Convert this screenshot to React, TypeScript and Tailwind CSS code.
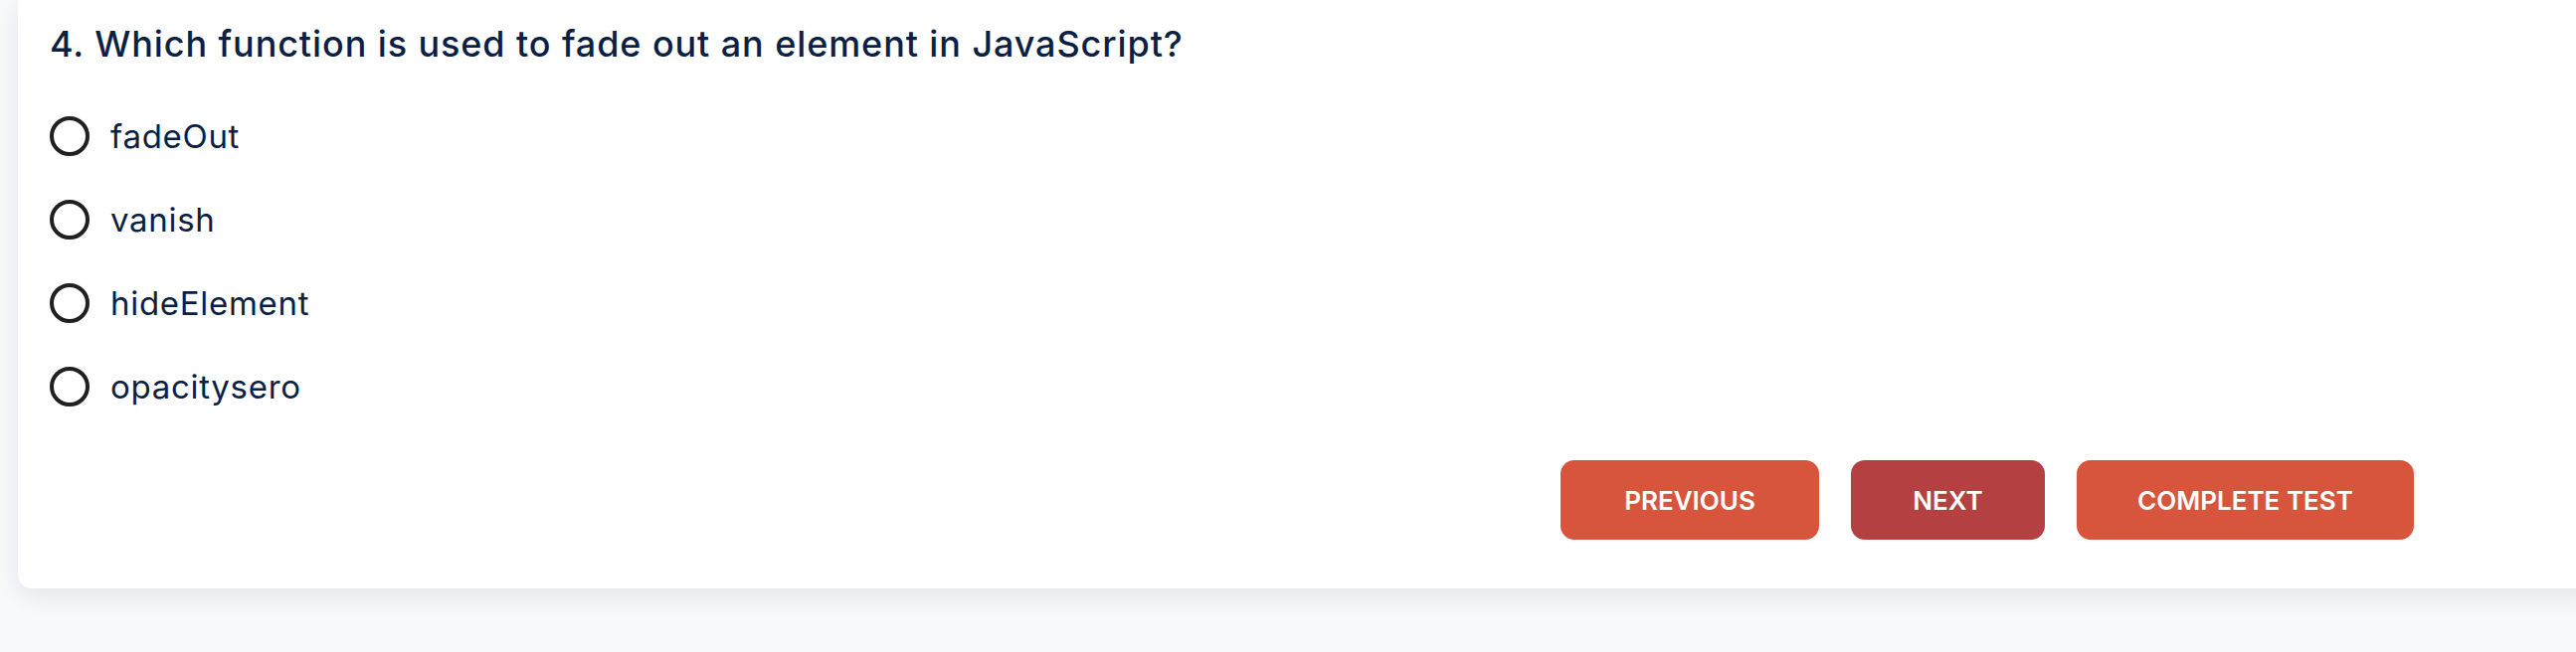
import { useState } from "react";

const options = ["fadeOut", "vanish", "hideElement", "opacitysero"];

export default function App() {
  const [selected, setSelected] = useState<number | null>(null);

  return (
    <div
      className="min-h-[656px] w-full overflow-hidden bg-[#f8f9fb] pl-[18px]"
      style={{ fontFamily: "Inter, 'Open Sans', sans-serif" }}
    >
      {/* Question card */}
      <div className="-mr-[24px] rounded-b-[14px] bg-white pl-[32px] pt-[22px] pb-[49px] pr-[187px] shadow-[0_8px_24px_rgba(20,30,60,0.09)]">
        <h2 className="text-[36px] leading-[44px] font-medium tracking-[0.9px] text-[#0c1f44]">
          4. Which function is used to fade out an element in JavaScript?
        </h2>

        <div className="mt-[29px] flex flex-col">
          {options.map((opt, i) => (
            <label
              key={opt}
              className="flex h-[84px] cursor-pointer items-center gap-[21px]"
              onClick={() => setSelected(i)}
            >
              <span className="flex h-[40px] w-[40px] shrink-0 items-center justify-center rounded-full border-[4px] border-[#202020]">
                {selected === i && <span className="h-[18px] w-[18px] rounded-full bg-[#202020]" />}
              </span>
              <span className="text-[33px] leading-none tracking-[0.7px] text-[#0c1f44]">{opt}</span>
            </label>
          ))}
        </div>

        {/* Navigation */}
        <div className="mt-[32px] flex justify-end gap-[32px]">
          <button className="h-[80px] w-[260px] rounded-[14px] bg-[#d8553d] text-[26px] font-semibold uppercase text-white">
            Previous
          </button>
          <button className="h-[80px] w-[195px] rounded-[14px] bg-[#b54041] text-[26px] font-semibold uppercase text-white">
            Next
          </button>
          <button className="h-[80px] w-[339px] rounded-[14px] bg-[#d8553d] text-[26px] font-semibold uppercase text-white">
            Complete Test
          </button>
        </div>
      </div>
    </div>
  );
}
